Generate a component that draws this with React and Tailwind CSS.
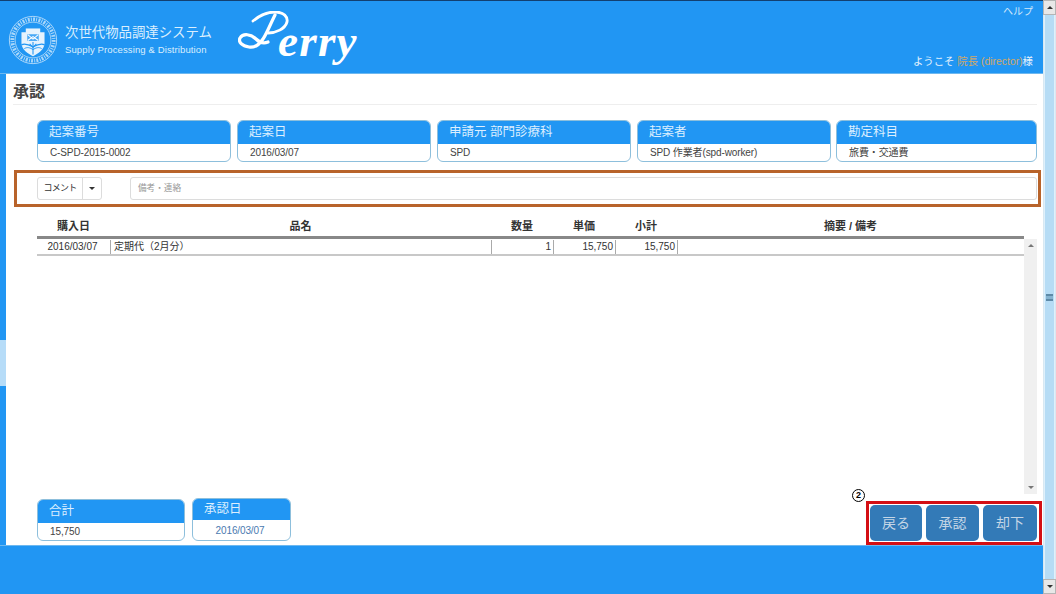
import React from "react";

const font = { fontFamily: '"Liberation Sans","Noto Sans CJK JP",sans-serif' };

function Seal() {
  return (
    <svg width="50" height="50" viewBox="0 0 52 52" className="shrink-0">
      <circle cx="26" cy="26" r="24.6" fill="none" stroke="#cfe8fb" strokeWidth="0.8" />
      <circle cx="26" cy="26" r="21.5" fill="none" stroke="#e6f3fd" strokeWidth="4" strokeDasharray="2 1.2 1 1.4" opacity="0.7" />
      <circle cx="26" cy="26" r="18.6" fill="none" stroke="#d8ecfb" strokeWidth="0.7" />
      <path d="M14 18 L38 18 L38 29 C38 36 31 40 26 43 C21 40 14 36 14 29 Z" fill="#e6f3fd" />
      <rect x="18.5" y="14" width="15" height="5" fill="#e6f3fd" />
      <path d="M20 20 H32 V27 H20 Z" fill="#4aa9f5" />
      <path d="M20.5 20.5 L26 25 L31.5 20.5 M20.5 26.5 L26 22.5 L31.5 26.5" fill="none" stroke="#fff" strokeWidth="1.1" />
      <path d="M14 31 C18 29 22 31 26 33 C30 31 34 29 38 31" fill="none" stroke="#2196f3" strokeWidth="1.4" />
      <path d="M17 35 C20 33 23 34 26 36 C29 34 32 33 35 35" fill="none" stroke="#2196f3" strokeWidth="1" />
      <path d="M26 28 V41 M22.5 30 L26 34 L29.5 30" fill="none" stroke="#2196f3" strokeWidth="1.1" />
    </svg>
  );
}

function Perry() {
  return (
    <div className="relative w-[124px] h-[56px] shrink-0 text-white">
      <svg width="124" height="56" viewBox="0 0 124 56" className="absolute left-0 top-0">
        <path d="M15 10 C22 4 30 1 37 1 C46 1 50 6 49 11 C47 18 38 22 30 22" fill="none" stroke="#fff" strokeWidth="2.8" strokeLinecap="round" />
        <path d="M37 4 C32 14 28 24 25 28 C21 34 17 37 11 36 C4 35 0 31 2 27 C5 22 13 23 18 28 C21 31 25 33 30 31" fill="none" stroke="#fff" strokeWidth="3.2" strokeLinecap="round" />
      </svg>
      <span className="absolute left-[40px] top-[5px] text-[45px] leading-[50px] italic font-bold tracking-[1.2px]" style={{ fontFamily: '"Liberation Serif",serif' }}>
        erry
      </span>
    </div>
  );
}

function Card({ title, value, className = "", valueClass = "text-[#444] pl-[12px]", headClass = "h-[23px]", titleClass = "pl-[11px]" }) {
  return (
    <div className={`rounded-[6px] border border-[#8dbfdc] overflow-hidden bg-white flex flex-col ${className}`}>
      <div className={`bg-[#2196f3] text-[#dcefff] text-[12.5px] flex items-center ${titleClass} ${headClass}`}>{title}</div>
      <div className={`flex-1 flex items-center text-[10px] tracking-[-0.12px] ${valueClass}`}>{value}</div>
    </div>
  );
}

const grid = "grid grid-cols-[73px_381px_62px_62px_62px_347px]";

function Head({ children, className = "" }) {
  return <div className={`text-center text-[11px] font-bold text-[#333] ${className}`}>{children}</div>;
}

function Cell({ children, className = "" }) {
  return <div className={`h-[14px] flex items-center text-[10px] text-[#333] ${className}`}>{children}</div>;
}

function ActionButton({ children, className = "" }) {
  return (
    <button className={`h-[36px] rounded-[5px] bg-[#337ab7] text-[#c4d6e6] text-[14px] flex items-center justify-center ${className}`}>
      {children}
    </button>
  );
}

function Scrollbar() {
  return (
    <div className="w-[13px] shrink-0 bg-[#d8e8f2] flex flex-col">
      <div className="h-[15px] bg-[#e8e8e8] border border-[#b5b5b5] flex items-center justify-center">
        <div className="w-0 h-0 border-x-[3px] border-x-transparent border-b-[3px] border-b-[#333]" />
      </div>
      <div className="flex-1 mx-px bg-[#b6dcf5] border-x border-[#dff0fb] flex items-center justify-center">
        <div className="w-[7px] h-[7px] border-y-2 border-[#5d8aa8] bg-[#85b3d0]" />
      </div>
      <div className="h-[15px] bg-[#e8e8e8] border border-[#b5b5b5] flex items-center justify-center">
        <div className="w-0 h-0 border-x-[3px] border-x-transparent border-t-[3px] border-t-[#333]" />
      </div>
    </div>
  );
}

export default function App() {
  return (
    <div className="w-[1056px] h-[594px] flex overflow-hidden bg-white" style={font}>
      <div className="flex-1 flex flex-col min-w-0">
        <header className="h-[74px] shrink-0 bg-[#2196f3] border-t border-[#123f70] border-b border-b-[#6db8f0] flex justify-between pl-[8px] pr-[10px]">
          <div className="flex items-start pt-[14px]">
            <Seal />
            <div className="ml-[7px] mt-[9px] w-[173px] text-[#d9eefe]">
              <div className="text-[13.4px] leading-[17px] whitespace-nowrap">次世代物品調達システム</div>
              <div className="text-[9.5px] leading-[12px] mt-[3px] tracking-[0.12px] whitespace-nowrap">Supply Processing &amp; Distribution</div>
            </div>
            <div className="-mt-[4px]"><Perry /></div>
          </div>
          <div className="flex flex-col justify-between items-end pt-[4px] pb-[4px]">
            <div className="text-[10px] text-[#cfe6fa] leading-[14px]">ヘルプ</div>
            <div className="text-[10.4px] text-[#e4f2fd] leading-[14px] whitespace-nowrap">
              ようこそ <span className="text-[#d0a868]">院長 (director)</span>様
            </div>
          </div>
        </header>

        <div className="h-[471px] shrink-0 flex relative z-10">
          <div className="w-[6px] shrink-0 flex flex-col">
            <div className="h-[266px] bg-[#2196f3]" />
            <div className="h-[46px] bg-[#b6dcf8]" />
            <div className="flex-1 bg-[#2196f3]" />
          </div>
          <main className="flex-1 min-w-0 flex flex-col relative">
            <div className="ml-[7px] mr-[6px] h-[31px] border-b border-[#eeeeee] flex items-center text-[16px] font-bold text-[#444] pt-[6px]">承認</div>

            <div className="mt-[15px] ml-[31px] mr-[6px] flex h-[42px]">
              <Card title="起案番号" value="C-SPD-2015-0002" className="w-[194px]" />
              <Card title="起案日" value="2016/03/07" className="w-[194px] ml-[6px]" />
              <Card title="申請元 部門診療科" value="SPD" className="w-[194px] ml-[6px]" />
              <Card title="起案者" value="SPD 作業者(spd-worker)" className="w-[194px] ml-[6px]" />
              <Card title="勘定科目" value="旅費・交通費" className="w-[201px] ml-[5px]" />
            </div>

            <div className="mt-[8px] ml-[8px] mr-[2px] h-[37px] border-[3px] border-[#b8632a] flex items-center pl-[20px] pr-[1px]">
              <div className="flex h-[23px] w-[65px] border border-[#dcdcdc] rounded-[3px] shrink-0">
                <div className="w-[45px] border-r border-[#dcdcdc] flex items-center justify-center text-[9px] tracking-[-0.7px] text-[#333]">コメント</div>
                <div className="flex-1 flex items-center justify-center">
                  <div className="w-0 h-0 border-x-[3px] border-x-transparent border-t-[3px] border-t-[#333]" />
                </div>
              </div>
              <div className="ml-[28px] flex-1 h-[23px] border border-[#dcdcdc] rounded-[3px] flex items-center pl-[7px] text-[8.6px] text-[#999]">備考・連絡</div>
            </div>

            <div className="mt-[10px] ml-[31px] mr-[5px] flex-1 min-h-0 flex flex-col">
              <div className={`${grid} w-[987px] h-[19px] items-center`}>
                <Head className="text-[10.6px]">購入日</Head>
                <Head>品名</Head>
                <Head>数量</Head>
                <Head>単価</Head>
                <Head>小計</Head>
                <Head className="text-[10.3px]">摘要 / 備考</Head>
              </div>
              <div className="w-[987px] h-[3px] bg-[#888888]" />
              <div className="flex h-[256px]">
                <div className="w-[987px]">
                  <div className={`${grid} h-[17px] border-b-2 border-[#c8c8c8] pt-px`}>
                    <Cell className="justify-center pr-[2px]">2016/03/07</Cell>
                    <Cell className="border-l border-[#aaaaaa] pl-[3px] text-[10.7px]">定期代（2月分）</Cell>
                    <Cell className="border-l border-[#aaaaaa] justify-end pr-[2px]">1</Cell>
                    <Cell className="border-l border-[#aaaaaa] justify-end pr-[2px]">15,750</Cell>
                    <Cell className="border-l border-[#aaaaaa] justify-end pr-[2px]">15,750</Cell>
                    <Cell className="border-l border-[#aaaaaa]" />
                  </div>
                </div>
                <div className="w-[13px] bg-[#f0f0f0] flex flex-col justify-between items-center py-[5px]">
                  <div className="w-0 h-0 border-x-[3px] border-x-transparent border-b-[3px] border-b-[#777]" />
                  <div className="w-0 h-0 border-x-[3px] border-x-transparent border-t-[3px] border-t-[#777]" />
                </div>
              </div>

              <div className="flex justify-between items-start mt-[3px] -mr-[4px]">
                <div className="flex items-end h-[44px]">
                  <Card title="合計" value="15,750" className="w-[148px] h-[42px]" />
                  <Card title="承認日" value="2016/03/07" className="w-[99px] h-[43px] ml-[7px]" valueClass="text-[#4a7ab0] justify-center pr-[3px]" headClass="h-[21px]" titleClass="pl-[11px]" />
                </div>
                <div className="border-[3px] border-[#d40f14] bg-white h-[44px] w-[176px] mt-[4px] flex items-center gap-[4px] pl-[1px]">
                  <ActionButton className="w-[52px]">戻る</ActionButton>
                  <ActionButton className="w-[53px]">承認</ActionButton>
                  <ActionButton className="w-[54px]">却下</ActionButton>
                </div>
              </div>
            </div>

            <div className="absolute left-[846px] top-[415px] w-[13px] h-[13px] rounded-full border-[1.5px] border-black bg-white flex items-center justify-center text-[9px] leading-none font-bold text-black">2</div>
          </main>
        </div>

        <footer className="flex-1 bg-[#2196f3] border-t border-[#6db8f0]" />
      </div>
      <Scrollbar />
    </div>
  );
}
